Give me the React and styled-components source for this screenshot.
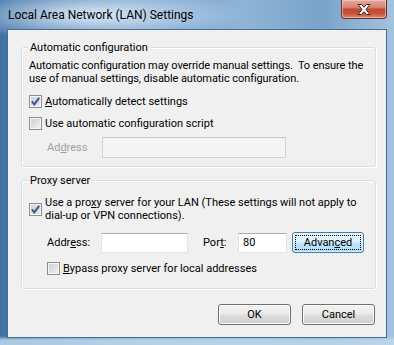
import React from 'react'
import styled, { createGlobalStyle } from 'styled-components'

const GlobalStyle = createGlobalStyle`
  html, body {
    margin: 0;
    padding: 0;
    overflow: hidden;
    background: #ffffff;
  }
  body {
    font-family: Roboto, "Noto Sans", "Liberation Sans", sans-serif;
    font-size: 11px;
    color: #000;
  }
`

const Window = styled.div`
  width: 394px;
  height: 345px;
  display: flex;
  flex-direction: column;
  box-sizing: border-box;
  background:
    radial-gradient(ellipse 150px 26px at 95px 15px, rgba(226, 238, 249, 0.95), rgba(226, 238, 249, 0) 100%),
    linear-gradient(to bottom, rgba(255, 255, 255, 0) 336px, rgba(190, 216, 238, 0.85) 340px),
    linear-gradient(to right, #3f72a6 0%, #6d9bc6 30%, #8fb4d6 62%, #7aa3ca 82%, #a4c3df 100%);
`

const TitleBar = styled.div`
  height: 29px;
  display: flex;
  justify-content: space-between;
  align-items: flex-start;
  padding: 0 7px 0 8px;
`

const Title = styled.div`
  margin-top: 7px;
  line-height: 16px;
  font-size: 12px;
  color: #000;
`

const CloseButton = styled.div`
  width: 46px;
  height: 19px;
  box-sizing: border-box;
  border: 1px solid #6b3128;
  border-top: none;
  border-radius: 0 0 4px 4px;
  background: linear-gradient(to bottom, #e2aa9f 0%, #d48676 40%, #c2492f 52%, #c6533a 75%, #dd8b6a 100%);
  box-shadow: inset 0 0 0 1px rgba(255, 210, 200, 0.55);
  display: flex;
  align-items: center;
  justify-content: center;
`

const Client = styled.div`
  margin: 0 7px;
  height: 309px;
  box-sizing: border-box;
  border: 1px solid #4d6d8f;
  background: #f0f0f0;
  padding: 17px 10px 0 13px;
  display: flex;
  flex-direction: column;
`

const Group = styled.div`
  border: 1px solid #d5dfe5;
  border-radius: 3px;
  box-shadow: inset 1px 1px 0 #ffffff, 1px 1px 0 #ffffff;
  padding: 0 7px ${p => p.$bottom}px 7px;
  margin-top: ${p => p.$top || 0}px;
  display: flex;
  flex-direction: column;
`

const GroupTitle = styled.div`
  margin: -8px 0 0 -1px;
  align-self: flex-start;
  padding: 0 2px;
  line-height: 15px;
  background: #f0f0f0;
`

const Description = styled.div`
  margin-top: 4px;
  line-height: 13px;
  white-space: nowrap;
  letter-spacing: -0.08px;
`

const CheckRow = styled.label`
  display: flex;
  align-items: center;
  gap: 3px;
  min-height: 16px;
  margin-top: ${p => p.$top}px;
  margin-left: ${p => p.$indent || 0}px;
  line-height: 13px;
  white-space: nowrap;
`

const Box = styled.span`
  width: 13px;
  height: 13px;
  flex: none;
  box-sizing: border-box;
  border: 1px solid #8e8f8f;
  background: ${p => p.$checked
    ? 'linear-gradient(135deg, #c9cfdc 0%, #e7eaf2 100%)'
    : 'linear-gradient(135deg, #cbcbcb 0%, #f4f4f4 100%)'};
  box-shadow: inset 0 0 0 1px #f5f5f5;
  display: flex;
  align-items: center;
  justify-content: center;
`

const FieldRow = styled.div`
  display: flex;
  align-items: center;
  margin-top: ${p => p.$top}px;
  margin-left: 18px;
`

const FieldLabel = styled.span`
  width: ${p => p.$width}px;
  flex: none;
  color: ${p => p.$disabled ? '#a0a0a0' : '#000'};
  white-space: nowrap;
`

const TextBox = styled.div`
  width: ${p => p.$width}px;
  height: ${p => p.$height || 20}px;
  box-sizing: border-box;
  flex: none;
  border: 1px solid ${p => p.$disabled ? '#d3d3d3' : '#e2e3ea'};
  border-top-color: ${p => p.$disabled ? '#c8c8c8' : '#abadb3'};
  background: ${p => p.$disabled ? '#f4f4f4' : '#ffffff'};
  padding-left: 4px;
  display: flex;
  align-items: center;
  margin-right: ${p => p.$gap || 0}px;
`

const Button = styled.div`
  width: ${p => p.$width}px;
  height: 21px;
  box-sizing: border-box;
  flex: none;
  border: 1px solid ${p => p.$focused ? '#3c7fb1' : '#707070'};
  border-radius: 3px;
  background: ${p => p.$focused
    ? 'linear-gradient(to bottom, #ebf6fd 0%, #dcf1fc 48%, #c1e6fb 52%, #a9daf5 100%)'
    : 'linear-gradient(to bottom, #f2f2f2 0%, #ebebeb 48%, #dddddd 52%, #cfcfcf 100%)'};
  box-shadow: inset 0 0 0 1px ${p => p.$focused ? 'rgba(255,255,255,0.5)' : '#fcfcfc'};
  outline: ${p => p.$focused ? '1px dotted #000' : 'none'};
  outline-offset: -4px;
  display: flex;
  align-items: center;
  justify-content: center;
  line-height: 13px;
`

const Footer = styled.div`
  display: flex;
  justify-content: flex-end;
  gap: 11px;
  margin-top: 15px;
  padding-right: 1px;
`

const Key = styled.span`
  text-decoration: underline;
  text-underline-offset: 1px;
`

const Check = () => (
  <svg width="9" height="9" viewBox="0 0 9 9">
    <path d="M0.8 4.4 L3.3 7.4 L8.2 0.8" fill="none" stroke="#44598c" strokeWidth="2.1" strokeLinejoin="miter" />
  </svg>
)

const CloseGlyph = () => (
  <svg width="14" height="11" viewBox="0 0 14 11">
    <path d="M1 0.5 H4.6 L7 3.3 L9.4 0.5 H13 L8.9 5.5 L13 10.5 H9.4 L7 7.7 L4.6 10.5 H1 L5.1 5.5 Z"
      fill="#ffffff" stroke="#47201a" strokeWidth="1" strokeLinejoin="round" />
  </svg>
)

const Checkbox = ({ checked, children, top, indent }) => (
  <CheckRow $top={top} $indent={indent}>
    <Box $checked={checked}>{checked && <Check />}</Box>
    <span>{children}</span>
  </CheckRow>
)

export default function App() {
  return (
    <>
      <GlobalStyle />
      <Window>
        <TitleBar>
          <Title>Local Area Network (LAN) Settings</Title>
          <CloseButton><CloseGlyph /></CloseButton>
        </TitleBar>
        <Client>
          <Group $bottom={8}>
            <GroupTitle>Automatic configuration</GroupTitle>
            <Description>
              Automatic configuration may override manual settings.&nbsp; To ensure the<br />
              use of manual settings, disable automatic configuration.
            </Description>
            <Checkbox checked top={8}><Key>A</Key>utomatically detect settings</Checkbox>
            <Checkbox top={6}>Use automatic configuration script</Checkbox>
            <FieldRow $top={6}>
              <FieldLabel $width={55} $disabled>Ad<Key>d</Key>ress</FieldLabel>
              <TextBox $width={184} $height={21} $disabled />
            </FieldRow>
          </Group>
          <Group $top={13} $bottom={12}>
            <GroupTitle>Proxy server</GroupTitle>
            <Checkbox checked top={8}>
              Use a pro<Key>x</Key>y server for your LAN (These settings will not apply to<br />
              dial-up or VPN connections).
            </Checkbox>
            <FieldRow $top={10}>
              <FieldLabel $width={54}>Addr<Key>e</Key>ss:</FieldLabel>
              <TextBox $width={87} $gap={15} />
              <FieldLabel $width={35}>Por<Key>t</Key>:</FieldLabel>
              <TextBox $width={49} $gap={5}>80</TextBox>
              <Button $width={72} $focused>Advan<Key>c</Key>ed</Button>
            </FieldRow>
            <Checkbox top={7} indent={18}><Key>B</Key>ypass proxy server for local addresses</Checkbox>
          </Group>
          <Footer>
            <Button $width={73}>OK</Button>
            <Button $width={73}>Cancel</Button>
          </Footer>
        </Client>
      </Window>
    </>
  )
}
